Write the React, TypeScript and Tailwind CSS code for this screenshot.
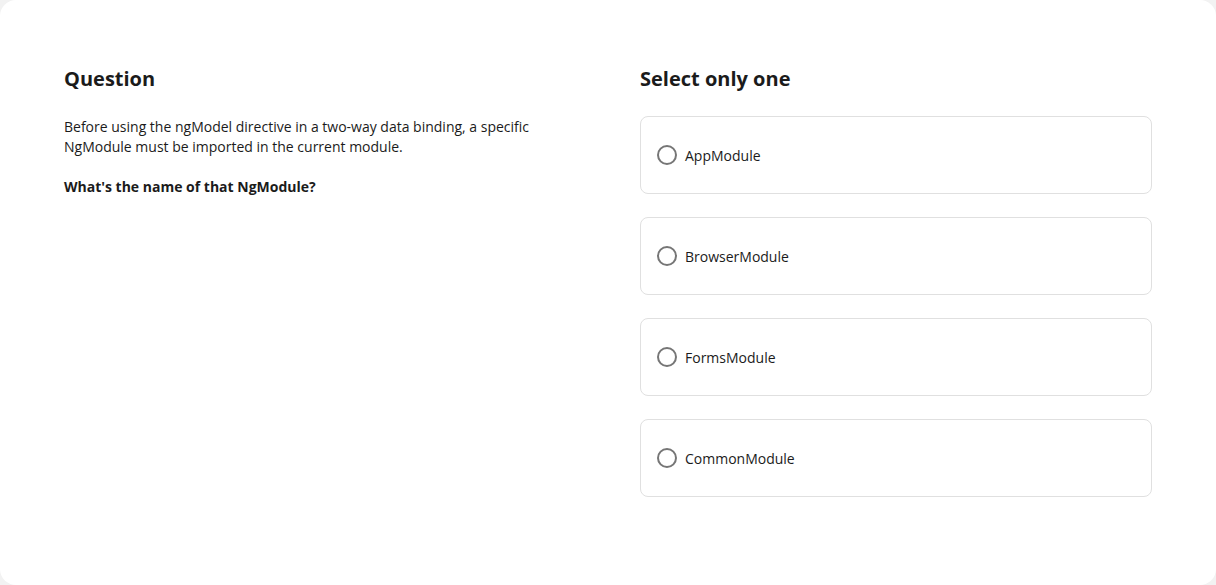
const options = ['AppModule', 'BrowserModule', 'FormsModule', 'CommonModule']

function OptionRow({ label }: { label: string }) {
  return (
    <label className="flex h-[78px] items-center gap-2 rounded-lg border border-[#e0e0e0] bg-white px-4 cursor-pointer">
      <span className="h-5 w-5 shrink-0 rounded-full border-2 border-[#767676]" />
      <span className="pt-0.5 text-sm text-[#1b1b1b]">{label}</span>
    </label>
  )
}

export default function App() {
  return (
    <div className="min-h-[585px] bg-[#f2f2f2] font-['Open_Sans',sans-serif]">
      <div className="grid h-[585px] grid-cols-2 gap-16 rounded-2xl bg-white px-16 pt-16">
        <section>
          <h2 className="mt-px mb-6 text-xl leading-7 font-bold text-[#1b1b1b]">Question</h2>
          <p className="text-sm leading-5 text-[#1b1b1b] pr-4">
            Before using the ngModel directive in a two-way data binding, a specific NgModule must be imported in the
            current module.
          </p>
          <p className="mt-5 text-sm leading-5 font-bold text-[#1b1b1b]">What's the name of that NgModule?</p>
        </section>
        <section>
          <h2 className="mt-px mb-[23px] text-xl leading-7 font-bold text-[#1b1b1b]">Select only one</h2>
          <div className="flex flex-col gap-[23px]">
            {options.map((o) => (
              <OptionRow key={o} label={o} />
            ))}
          </div>
        </section>
      </div>
    </div>
  )
}
